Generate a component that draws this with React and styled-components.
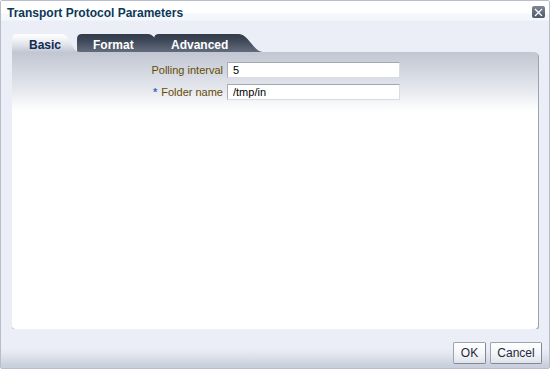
import React from "react";
import styled, { createGlobalStyle } from "styled-components";

const Global = createGlobalStyle`
  html, body {
    margin: 0;
    padding: 0;
    width: 550px;
    height: 369px;
    overflow: hidden;
    font-family: "Liberation Sans", Arial, sans-serif;
  }
  #root {
    width: 550px;
    height: 369px;
  }
`;

const Dialog = styled.div`
  box-sizing: border-box;
  width: 550px;
  height: 369px;
  display: flex;
  flex-direction: column;
  background: #eceef7;
  border: 1px solid #b9bdca;
  border-radius: 2px;
`;

const TitleBar = styled.div`
  height: 25px;
  display: flex;
  justify-content: space-between;
  align-items: flex-start;
  padding: 4px 4px 0 6px;
  box-sizing: border-box;
  background: linear-gradient(#ffffff 0, #ffffff 12px, #f4f7fb 13px, #f4f7fb 19px, #eceef7 20px);
`;

const Title = styled.div`
  font-size: 12px;
  font-weight: bold;
  line-height: 16px;
  color: #0d3858;
`;

const CloseButton = styled.div`
  width: 13px;
  height: 12px;
  margin-top: 1px;
  border-radius: 2px;
  background: linear-gradient(#7d8797, #4d5869);
  display: flex;
  align-items: center;
  justify-content: center;
`;

const Body = styled.div`
  flex: 1;
  display: flex;
  flex-direction: column;
  padding: 8px 11px 0 10px;
  min-height: 0;
`;

const TabRow = styled.div`
  display: flex;
  height: 18px;
`;

const tabPath = (w, s) =>
  `path("M0 18 L0 5 Q0 0 5 0 L${w - s - 2} 0 C${w - s + 7} 0 ${w - 9} 18 ${w} 18 Z")`;

const Tab = styled.div`
  position: relative;
  width: ${(p) => p.$w}px;
  margin-left: ${(p) => p.$offset}px;
  z-index: ${(p) => p.$z};
  height: 18px;
  box-sizing: border-box;
  padding: 5px 0 0 ${(p) => p.$pad}px;
  font-size: 12px;
  font-weight: bold;
  line-height: 13px;
  clip-path: ${(p) => tabPath(p.$w, p.$s)};
  color: ${(p) => (p.$active ? "#102a52" : "#ffffff")};
  background: ${(p) =>
    p.$active
      ? "linear-gradient(#ffffff 0, #f6f7f9 4px, #dfe2e8 11px, #c3c8d3 18px)"
      : "linear-gradient(#323b49 0, #3d4656 6px, #566070 14px, #626b7b 18px)"};
`;

const Panel = styled.div`
  flex: 1;
  margin-left: 1px;
  background: linear-gradient(#c1c6d2 0, #d2d6df 18px, #e6e8ee 38px, #f7f8fa 52px, #ffffff 60px);
  border-radius: 0 4px 4px 4px;
  box-shadow: 1px 1px 0 #9da3ae, 0 1px 0 #a8aeb8;
  padding-top: 10px;
  box-sizing: border-box;
`;

const Form = styled.div`
  display: grid;
  grid-template-columns: 211px 173px;
  column-gap: 4px;
  row-gap: 6px;
`;

const Label = styled.label`
  font-size: 11px;
  line-height: 16px;
  color: #654c05;
  text-align: right;
`;

const Required = styled.span`
  color: #3d6fc0;
  font-weight: bold;
  margin-right: 4px;
`;

const Input = styled.input`
  box-sizing: border-box;
  height: 16px;
  width: 173px;
  margin: 0;
  padding: 0 0 0 5px;
  font-family: "Liberation Sans", Arial, sans-serif;
  font-size: 11px;
  color: #000;
  background: #fff;
  border: 1px solid #d9dde3;
  border-top-color: #a2a8b1;
  border-left-color: #a9afb8;
  outline: none;
`;

const Footer = styled.div`
  height: 39px;
  display: flex;
  justify-content: flex-end;
  align-items: flex-start;
  gap: 4px;
  padding: 13px 7px 0 0;
  box-sizing: border-box;
  background: linear-gradient(#eceef7 0, #eceef7 20px, #dde1ea 28px, #c9cfdc 37px);
`;

const Button = styled.button`
  height: 22px;
  width: ${(p) => p.$w}px;
  box-sizing: border-box;
  padding: 0;
  font-family: "Liberation Sans", Arial, sans-serif;
  font-size: 12px;
  color: #1d2a3c;
  border: 1px solid #9aa3b2;
  border-right-color: #7e8898;
  border-bottom-color: #7e8898;
  border-radius: 2px;
  background: linear-gradient(#ffffff 0, #f5f6f9 50%, #dfe3ea 100%);
`;

export default function App() {
  return (
    <>
      <Global />
      <Dialog>
        <TitleBar>
          <Title>Transport Protocol Parameters</Title>
          <CloseButton>
            <svg width="9" height="9" viewBox="0 0 9 9">
              <path d="M1 1 L8 8 M8 1 L1 8" stroke="#fff" strokeWidth="1.3" />
            </svg>
          </CloseButton>
        </TitleBar>
        <Body>
          <TabRow>
            <Tab $active $w={68} $s={16} $offset={1} $z={3} $pad={17}>
              Basic
            </Tab>
            <Tab $w={91} $s={18} $offset={-3} $z={1} $pad={16}>
              Format
            </Tab>
            <Tab $w={109} $s={22} $offset={-14} $z={2} $pad={17}>
              Advanced
            </Tab>
          </TabRow>
          <Panel>
            <Form>
              <Label>Polling interval</Label>
              <Input defaultValue="5" />
              <Label>
                <Required>*</Required>Folder name
              </Label>
              <Input defaultValue="/tmp/in" />
            </Form>
          </Panel>
        </Body>
        <Footer>
          <Button $w={33}>OK</Button>
          <Button $w={52}>Cancel</Button>
        </Footer>
      </Dialog>
    </>
  );
}
